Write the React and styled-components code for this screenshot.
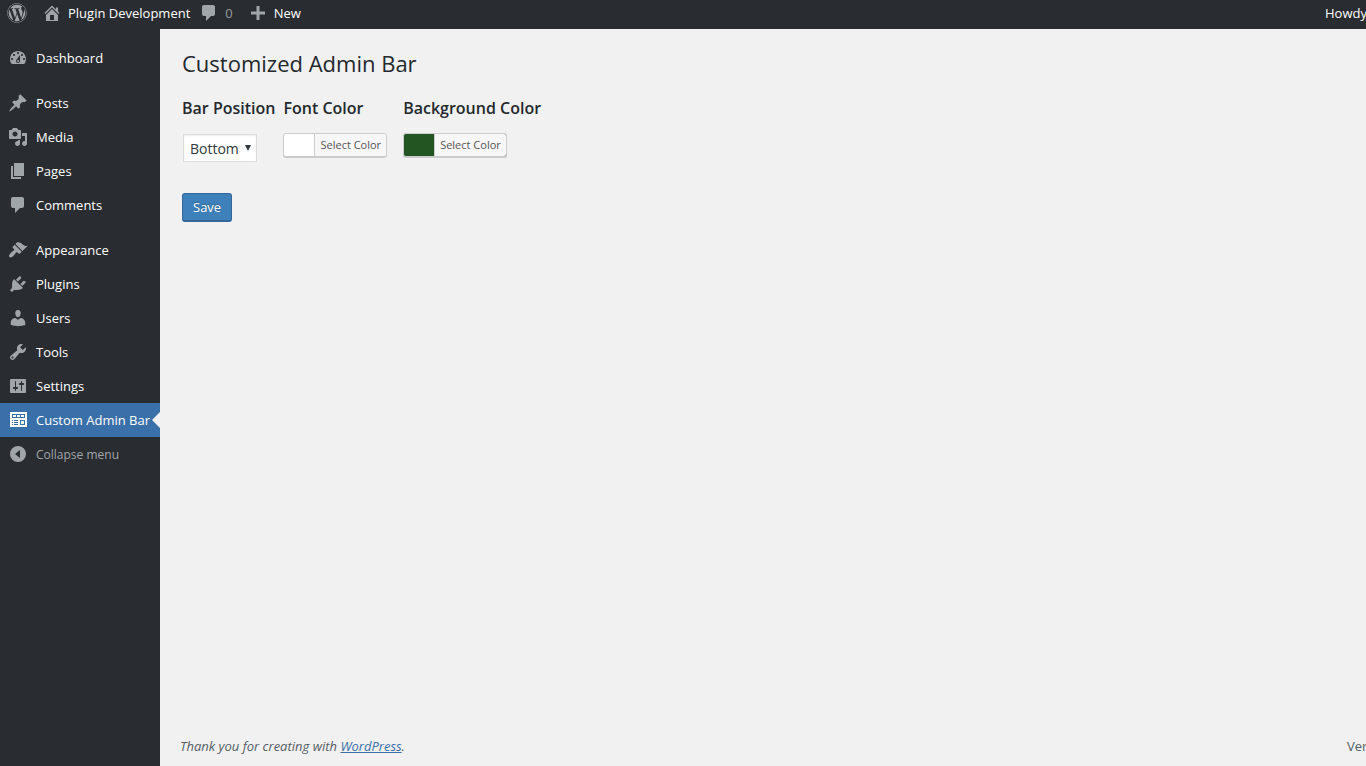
import React, { useState } from "react"
import { createGlobalStyle, styled } from "styled-components"
import { FaWordpress } from "react-icons/fa"

const icons = {
  home: "M16 8.5l1.53 1.53-1.06 1.06L10 4.6l-6.47 6.49-1.06-1.06L10 2.5l4 4v-2h2v4zm-6-2.46l6 5.99V18H4v-5.97zM12 17v-5H8v5h4z",
  comments: "M5 2h9c1.1 0 2 .9 2 2v7c0 1.1-.9 2-2 2h-2l-5 5v-5H5c-1.1 0-2-.9-2-2V4c0-1.1.9-2 2-2z",
  plus: "M17 8.5v3h-5.5V17h-3v-5.500H3v-3h5.500V3h3v5.500z",
  dashboard: "M3.76 16h12.48c1.1-1.37 1.76-3.11 1.76-5 0-4.42-3.58-8-8-8s-8 3.58-8 8c0 1.89.66 3.63 1.76 5zM10 4c.55 0 1 .45 1 1s-.45 1-1 1-1-.45-1-1 .45-1 1-1zM6 6c.55 0 1 .45 1 1s-.45 1-1 1-1-.45-1-1 .45-1 1-1zm8 0c.55 0 1 .45 1 1s-.45 1-1 1-1-.45-1-1 .45-1 1-1zm-5.370 5.550L12 7v6c0 1.100-.9 2-2 2s-2-.9-2-2c0-.57.24-1.080.63-1.450zM4 10c.55 0 1 .45 1 1s-.45 1-1 1-1-.45-1-1 .45-1 1-1zm12 0c.55 0 1 .45 1 1s-.45 1-1 1-1-.45-1-1 .45-1 1-1zm-5 3c0-.55-.45-1-1-1s-1 .45-1 1 .45 1 1 1 1-.45 1-1z",
  posts: "M10.440 3.020l1.820-1.820 6.360 6.350-1.830 1.820c-1.050-.68-2.480-.57-3.410.36l-.75.75c-.92.93-1.040 2.350-.35 3.410l-1.830 1.820-2.410-2.410-2.800 2.790c-.42.42-3.380 2.710-3.800 2.290s1.860-3.390 2.280-3.810l2.790-2.790L4.100 9.360l1.830-1.820c1.050.69 2.480.57 3.400-.36l.75-.75c.93-.92 1.050-2.350.36-3.410z",
  media: "M13 11V4c0-.55-.45-1-1-1h-1.670L9 1H5L3.670 3H2c-.55 0-1 .45-1 1v7c0 .55.45 1 1 1h10c.55 0 1-.45 1-1zM7 4.500c1.380 0 2.500 1.120 2.500 2.500S8.380 9.500 7 9.500 4.500 8.380 4.500 7 5.620 4.500 7 4.500zM14 6h5v10.500c0 1.380-1.120 2.500-2.500 2.500S14 17.880 14 16.500s1.120-2.500 2.500-2.500c.17 0 .34.02.5.05V9h-3V6zm-4 8.050V13h2v3.500c0 1.380-1.120 2.500-2.500 2.500S7 17.880 7 16.500 8.120 14 9.500 14c.17 0 .34.02.5.05z",
  pages: "M6 15V2h10v13H6zm-1 1h8v2H3V5h2v11z",
  appearance: "M14.480 11.060L7.410 3.990l1.500-1.500c.5-.56 2.300-.47 3.510.32 1.210.8 1.430 1.280 2.910 2.100 1.180.64 2.450 1.260 4.450.85zm-.71.71L6.700 4.700 4.930 6.470c-.39.39-.39 1.020 0 1.410l1.060 1.060c.39.39.39 1.030 0 1.420-.6.6-1.430 1.110-2.210 1.690-.35.26-.7.53-1.010.84C1.430 14.230.4 16.080 1.400 17.070c.99 1 2.840-.03 4.180-1.360.31-.31.58-.66.85-1.020.57-.78 1.080-1.610 1.690-2.210.39-.39 1.020-.39 1.410 0l1.060 1.060c.39.39 1.020.39 1.410 0z",
  plugins: "M13.110 4.360L9.870 7.600 8 5.730l3.240-3.240c.35-.34 1.050-.2 1.560.32.52.51.66 1.210.31 1.550zm-8 1.770l.91-1.120 9.010 9.010-1.190.84c-.71.71-2.630 1.160-3.820 1.160H6.140L4.900 17.260c-.59.59-1.540.59-2.120 0-.59-.58-.59-1.530 0-2.120l1.240-1.240v-3.880c0-1.130.4-3.190 1.090-3.890zm7.260 3.970l3.240-3.240c.34-.35 1.040-.21 1.550.31.52.51.66 1.210.31 1.550l-3.240 3.250z",
  users: "M10 9.250c-2.270 0-2.730-3.440-2.730-3.440C7 4.020 7.820 2 9.970 2c2.160 0 2.980 2.020 2.710 3.810 0 0-.41 3.440-2.680 3.440zm0 2.570L12.720 10c2.390 0 4.520 2.330 4.520 4.530v2.490s-3.650 1.130-7.240 1.130c-3.650 0-7.240-1.130-7.240-1.130v-2.490c0-2.250 1.940-4.480 4.470-4.480z",
  tools: "M16.680 9.770c-1.340 1.340-3.300 1.670-4.950.99l-5.410 6.520c-.99.99-2.590.99-3.580 0s-.99-2.590 0-3.570l6.520-5.420c-.68-1.650-.35-3.610.99-4.950 1.280-1.280 3.120-1.620 4.720-1.060l-2.890 2.890 2.820 2.820 2.860-2.870c.53 1.580.18 3.390-1.080 4.650zM3.810 16.210c.4.39 1.040.39 1.430 0 .4-.4.4-1.040 0-1.430-.39-.4-1.030-.4-1.430 0-.39.39-.39 1.030 0 1.430z",
  settings: "M18 16V4c0-.55-.45-1-1-1H3c-.55 0-1 .45-1 1v12c0 .55.45 1 1 1h14c.55 0 1-.45 1-1zM8 11h1c.55 0 1 .45 1 1s-.45 1-1 1H8v1.500c0 .28-.22.5-.5.5s-.5-.22-.5-.5V13H6c-.55 0-1-.45-1-1s.45-1 1-1h1V5.500c0-.28.22-.5.5-.5s.5.22.5.5V11zm5-2h-1c-.55 0-1-.45-1-1s.45-1 1-1h1V5.500c0-.28.22-.5.5-.5s.5.22.5.5V7h1c.55 0 1 .45 1 1s-.45 1-1 1h-1v5.500c0 .28-.22.5-.5.5s-.5-.22-.5-.5V9z",
  adminBar: "M2 2h17v15H2zM4 4v4h13V4zM5 5h3v2H5zM9 5h3v2H9zM13 5h3v2h-3zM4 10v1h1v-1zM6 10v1h4v-1zM4 12v1h1v-1zM6 12v1h4v-1zM4 14v1h1v-1zM6 14v1h4v-1zM12 10v5h5v-5zM13 11h3v3h-3z",
  collapse: "M10 2a8 8 0 1 0 0 16a8 8 0 1 0 0-16zM12 6v8l-5-4z",
}

const Icon = ({ name }) => (
  <svg width="20" height="20" viewBox="0 0 20 20" fill="currentColor" fillRule="evenodd" aria-hidden="true">
    <path d={icons[name]} />
  </svg>
)

const menu = [
  [{ icon: "dashboard", label: "Dashboard" }],
  [
    { icon: "posts", label: "Posts" },
    { icon: "media", label: "Media" },
    { icon: "pages", label: "Pages" },
    { icon: "comments", label: "Comments" },
  ],
  [
    { icon: "appearance", label: "Appearance" },
    { icon: "plugins", label: "Plugins" },
    { icon: "users", label: "Users" },
    { icon: "tools", label: "Tools" },
    { icon: "settings", label: "Settings" },
    { icon: "adminBar", label: "Custom Admin Bar", current: true },
  ],
]

const App = () => {

  const [position, setPosition] = useState("bottom")

  return (
    <>
      <GlobalStyle />
      <Screen>
        <TopBar>
          <TopLink href="#about" $gap="8px" aria-label="About WordPress"><FaWordpress size={20} /></TopLink>
          <TopLink href="#site" $gap="2px"><Icon name="home" />Plugin Development</TopLink>
          <TopLink href="#comments" $gap="8px" $muted><Icon name="comments" />0</TopLink>
          <TopLink href="#new" $gap="8px"><Icon name="plus" />New</TopLink>
          <Account><a href="#profile">Howdy, admin</a></Account>
        </TopBar>
        <Body>
          <Sidebar>
            {menu.map((group, i) => (
              <MenuGroup key={i}>
                {group.map(({ icon, label, current }) => (
                  <li key={label}>
                    <MenuLink href={`#${icon}`} $current={current}>
                      <Icon name={icon} />{label}
                    </MenuLink>
                  </li>
                ))}
              </MenuGroup>
            ))}
            <Collapse type="button"><Icon name="collapse" />Collapse menu</Collapse>
          </Sidebar>
          <Main>
            <form onSubmit={(e) => { e.preventDefault() }}>
              <Title>Customized Admin Bar</Title>
              <Fields>
                <Field>
                  <Label as="label" htmlFor="position">Bar Position</Label>
                  <SelectWrap>
                    <Select id="position" value={position} onChange={(e) => { setPosition(e.target.value) }}>
                      <option value="top">Top</option>
                      <option value="bottom">Bottom</option>
                    </Select>
                  </SelectWrap>
                </Field>
                <Field>
                  <Label id="font-color">Font Color</Label>
                  <ColorButton type="button" aria-describedby="font-color" $color="#ffffff"><span>Select Color</span></ColorButton>
                </Field>
                <Field>
                  <Label id="bg-color">Background Color</Label>
                  <ColorButton type="button" aria-describedby="bg-color" $color="#235523"><span>Select Color</span></ColorButton>
                </Field>
              </Fields>
              <Save type="submit">Save</Save>
            </form>
            <Footer>
              <em>Thank you for creating with <a href="#wordpress">WordPress</a>.</em>
              <Version>Version 4.9</Version>
            </Footer>
          </Main>
        </Body>
      </Screen>
    </>
  )
}

export default App

const GlobalStyle = createGlobalStyle`
  *{
    box-sizing: border-box;
  }

  body{
    margin: 0;
    background: #f1f1f1;
    color: #444;
    font: 13px/18px "Segoe UI", "Open Sans", "Noto Sans", sans-serif;
  }

  button, select{
    font-family: inherit;
  }
`

const Screen = styled.div`
  display: flex;
  flex-direction: column;
  min-height: 100vh;
  overflow: hidden;
`

const TopBar = styled.header`
  display: flex;
  height: 29px;
  padding: 0 0 3px;
  background: #292c31;
  white-space: nowrap;
`

const TopLink = styled.a`
  display: flex;
  align-items: center;
  gap: 6px;
  padding: 0 ${({ $gap }) => $gap} 0 7px;
  color: ${({ $muted }) => $muted ? "#9a9da2" : "#fff"};
  text-decoration: none;

  svg{
    flex: none;
    color: #a0a5aa;
  }
`

const Account = styled.div`
  display: flex;
  align-items: center;
  width: 41px;
  margin-left: auto;

  a{
    color: #fff;
    text-decoration: none;
  }
`

const Body = styled.div`
  display: flex;
  flex: 1;
`

const Sidebar = styled.nav`
  flex: none;
  width: 160px;
  padding-top: 12px;
  background: #292c31;
`

const MenuGroup = styled.ul`
  margin: 0;
  padding: 0;
  list-style: none;

  & + &{
    margin-top: 11px;
  }
`

const MenuLink = styled.a`
  position: relative;
  display: flex;
  align-items: center;
  gap: 8px;
  height: 34px;
  padding-left: 8px;
  background: ${({ $current }) => $current ? "#3a70a9" : "transparent"};
  color: #fff;
  font-size: 13px;
  white-space: nowrap;
  text-decoration: none;

  svg{
    flex: none;
    color: ${({ $current }) => $current ? "#fff" : "#a0a5aa"};
  }

  &::after{
    content: "";
    display: ${({ $current }) => $current ? "block" : "none"};
    position: absolute;
    right: 0;
    top: 9px;
    border: 8px solid transparent;
    border-left-width: 0;
    border-right-color: #f1f1f1;
  }
`

const Collapse = styled.button`
  display: flex;
  align-items: center;
  gap: 8px;
  width: 100%;
  height: 34px;
  padding: 0 0 0 8px;
  border: none;
  background: transparent;
  color: #a0a5aa;
  font-size: 12px;
`

const Main = styled.main`
  display: flex;
  flex: 1;
  flex-direction: column;
  justify-content: space-between;
  min-width: 0;
  padding: 19px 0 11px 20px;
`

const Title = styled.h1`
  margin: 0;
  padding-left: 2px;
  color: #23282d;
  font-size: 22px;
  font-weight: 400;
  line-height: 30px;
`

const Fields = styled.div`
  display: flex;
  gap: 8px;
  margin: 19px 0 31px 2px;
`

const Field = styled.div`
  display: flex;
  flex-direction: column;
  align-items: flex-start;
`

const Label = styled.div`
  margin-bottom: 14px;
  color: #23282d;
  font-size: 16px;
  font-weight: 600;
  line-height: 22px;
`

const SelectWrap = styled.div`
  position: relative;
  margin: 1px 0 0 1px;

  &::after{
    content: "";
    position: absolute;
    right: 6px;
    top: 11px;
    border: 3px solid transparent;
    border-top: 6px solid #32373c;
    border-bottom: none;
    pointer-events: none;
  }
`

const Select = styled.select`
  display: block;
  width: 74px;
  height: 28px;
  padding: 0 6px;
  border: 1px solid #ddd;
  border-radius: 0;
  background: #fff;
  box-shadow: inset 0 1px 2px rgba(0,0,0,0.07);
  color: #32373c;
  font-size: 14px;
  appearance: none;
`

const ColorButton = styled.button`
  height: 24px;
  margin-right: 8px;
  padding: 0 0 0 30px;
  border: 1px solid #ccc;
  border-radius: 3px;
  background: ${({ $color }) => $color};
  box-shadow: 0 1px 0 #ccc;

  span{
    display: block;
    padding: 0 5px;
    border-left: 1px solid #ccc;
    border-radius: 0 2px 2px 0;
    background: #f7f7f7;
    color: #555;
    font-size: 11px;
    line-height: 22px;
  }
`

const Save = styled.button`
  display: block;
  height: 29px;
  margin-left: 2px;
  padding: 0 10px;
  border: 1px solid #33669a;
  border-bottom-width: 2px;
  border-radius: 3px;
  background: #3e80b9;
  color: #fff;
  font-size: 13px;
  text-shadow: 0 -1px 1px #33669a;
`

const Footer = styled.footer`
  display: flex;
  justify-content: space-between;
  color: #555d66;
  white-space: nowrap;

  a{
    color: #3a70a9;
  }
`

const Version = styled.span`
  width: 19px;
`
